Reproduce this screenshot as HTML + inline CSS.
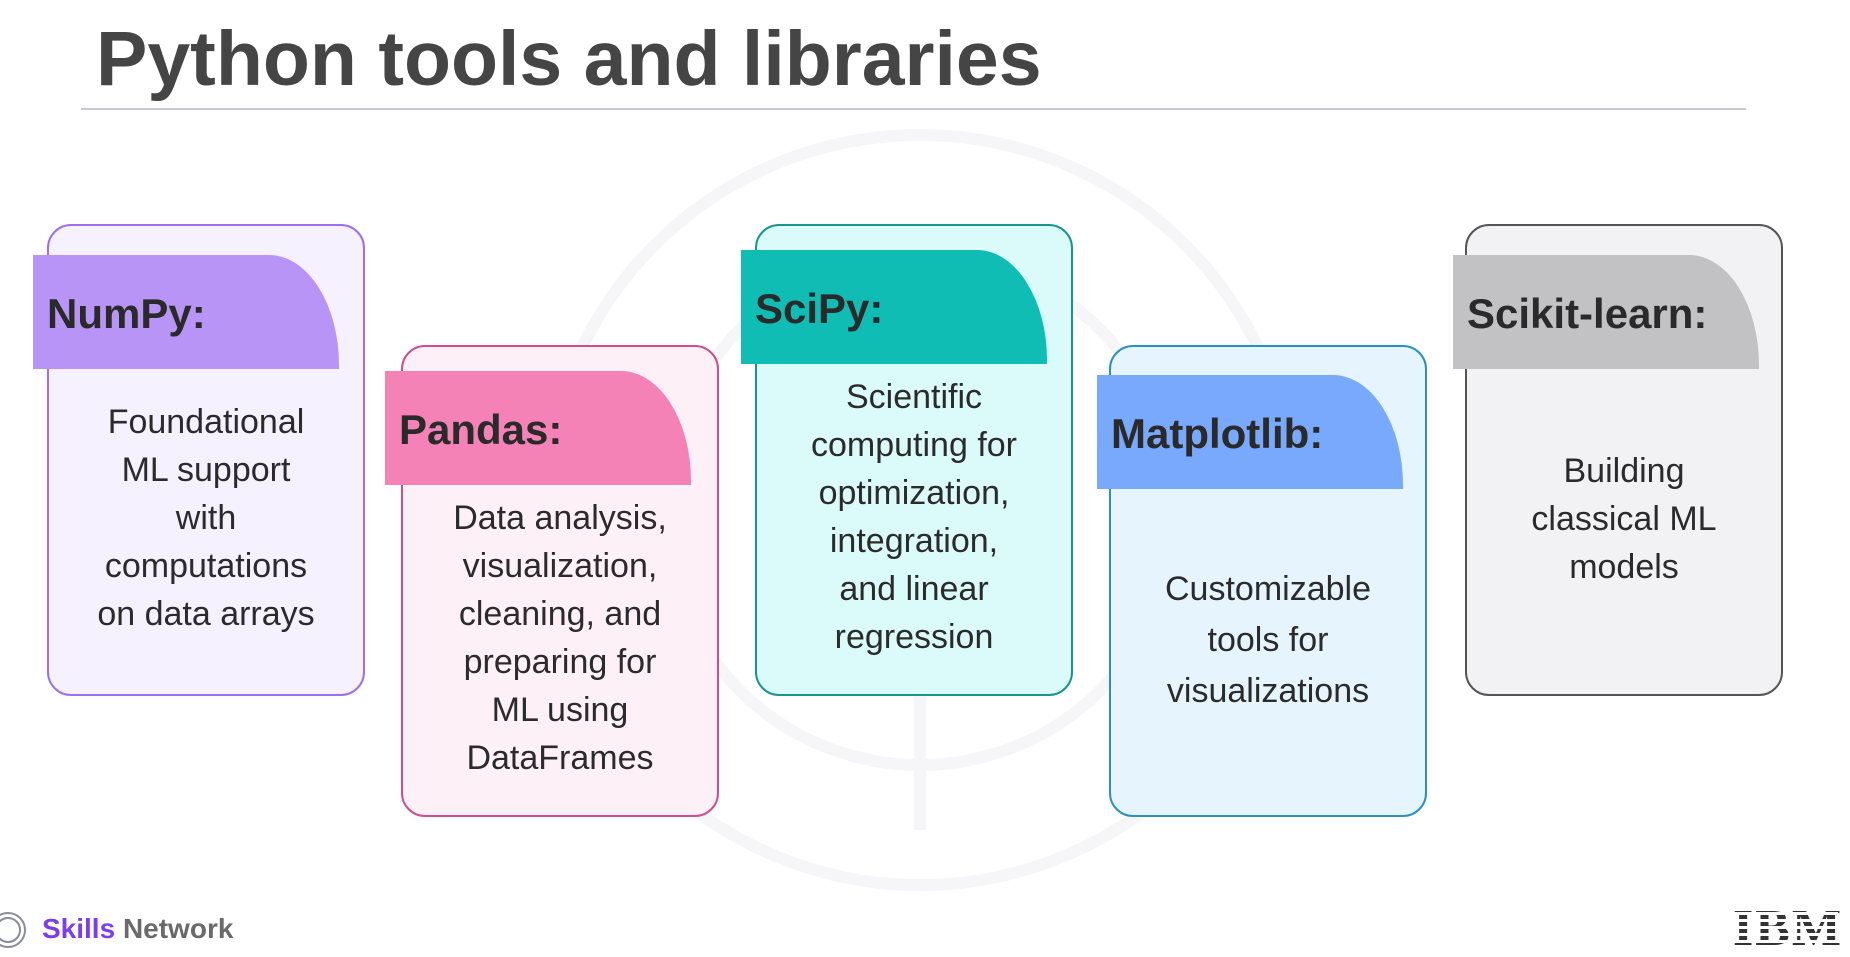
<!DOCTYPE html>
<html><head><style>
body{margin:0;width:1850px;height:953px;background:#fff;position:relative;overflow:hidden;font-family:"Liberation Sans",sans-serif;}
.t{position:absolute;left:96px;top:15px;font-size:77px;font-weight:bold;color:#454545;}
.line{position:absolute;left:81px;top:108px;width:1665px;height:2px;background:#c9c9d6;}
.card{position:absolute;width:318px;height:472px;border:2px solid;border-radius:24px;box-sizing:border-box;}
.tab{position:absolute;width:306px;height:114px;border-top-right-radius:70px 110px;box-sizing:border-box;font-weight:bold;font-size:42px;color:#2a2a2a;padding-left:14px;line-height:118px;}
.tx{position:absolute;width:318px;text-align:center;font-size:34px;line-height:48px;color:#2b2b2b;}
</style></head><body>
<svg style="position:absolute;left:0;top:0" width="1850" height="953">
<g fill="none" stroke="#f6f6f8" stroke-width="12">
<circle cx="920" cy="510" r="375"/>
<circle cx="920" cy="510" r="255"/>
<path d="M920 620 V830"/>
</g>
</svg>
<div class="t">Python tools and libraries</div>
<div class="line" style="width:1665px"></div>

<div class="card" style="left:47px;top:224px;background:#f6f1ff;border-color:#9d6ef2"></div>
<div class="tab" style="left:33px;top:255px;background:#b894f7">NumPy:</div>
<div class="tx" style="left:47px;top:398px">Foundational<br>ML support<br>with<br>computations<br>on data arrays</div>

<div class="card" style="left:401px;top:345px;background:#fdf0f7;border-color:#cf4f8a"></div>
<div class="tab" style="left:385px;top:371px;background:#f482b6">Pandas:</div>
<div class="tx" style="left:401px;top:494px">Data analysis,<br>visualization,<br>cleaning, and<br>preparing for<br>ML using<br>DataFrames</div>

<div class="card" style="left:755px;top:224px;background:#dbfafa;border-color:#18958c"></div>
<div class="tab" style="left:741px;top:250px;background:#0fbdb4">SciPy:</div>
<div class="tx" style="left:755px;top:373px">Scientific<br>computing for<br>optimization,<br>integration,<br>and linear<br>regression</div>

<div class="card" style="left:1109px;top:345px;background:#e5f4fd;border-color:#2b8fc6"></div>
<div class="tab" style="left:1097px;top:375px;background:#79a9fc">Matplotlib:</div>
<div class="tx" style="left:1109px;top:564px;line-height:51px">Customizable<br>tools for<br>visualizations</div>

<div class="card" style="left:1465px;top:224px;background:#f2f2f5;border-color:#555"></div>
<div class="tab" style="left:1453px;top:255px;background:#c2c2c5">Scikit-learn:</div>
<div class="tx" style="left:1465px;top:447px">Building<br>classical ML<br>models</div>

<svg style="position:absolute;left:0;top:910px" width="30" height="40"><g fill="none" stroke="#8a8aa0" stroke-width="2"><circle cx="8" cy="20" r="17"/><circle cx="8" cy="20" r="12"/></g></svg>
<div style="position:absolute;left:42px;top:913px;font-size:28px;font-weight:bold;color:#7c3cf0">Skills <span style="color:#6a6a6a">Network</span></div>
<div style="position:absolute;left:1733px;top:903px;font-size:52px;font-weight:bold;font-family:'Liberation Serif',serif;color:#333;letter-spacing:2px;line-height:52px">IBM</div>
<div style="position:absolute;left:1728px;top:905px;width:110px;height:48px;background:repeating-linear-gradient(#fff 0 3px,transparent 3px 7px)"></div>
</body></html>
